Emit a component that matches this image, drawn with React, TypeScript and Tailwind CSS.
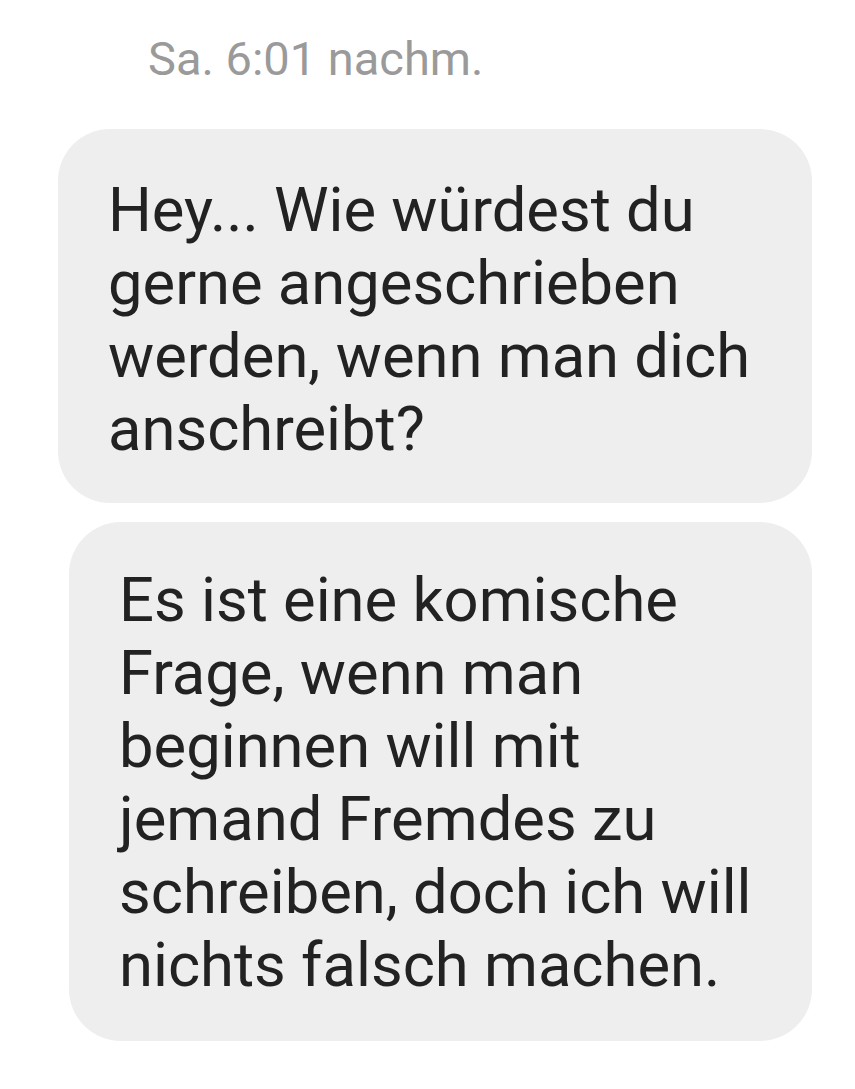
const messages = [
  {
    box: 'w-[754px] pt-[45px] pb-[37px]',
    lines: ['Hey... Wie würdest du', 'gerne angeschrieben', 'werden, wenn man dich', 'anschreibt?'],
  },
  {
    box: 'w-[743px] pt-[42px] pb-[39px]',
    lines: [
      'Es ist eine komische',
      'Frage, wenn man',
      'beginnen will mit',
      'jemand Fremdes zu',
      'schreiben, doch ich will',
      'nichts falsch machen.',
    ],
  },
];

const App = () => {
  return (
    <div className="min-h-screen bg-white font-['Roboto',sans-serif]">
      {/* Timestamp */}
      <div className="pl-[148px] pt-[31px] text-[47px] leading-[55px] text-[#9a9a9a]">
        Sa. 6:01 nachm.
      </div>

      {/* Bubbles */}
      <div className="mt-[43px] flex flex-col items-end gap-[19px] pr-[43px]">
        {messages.map((msg, i) => (
          <div
            key={i}
            className={`${msg.box} rounded-[52px] bg-[#eeeeee] px-[50px] text-[61.5px] leading-[73px] text-[#222222]`}
          >
            {msg.lines.map((line) => (
              <div key={line} className="whitespace-nowrap">
                {line}
              </div>
            ))}
          </div>
        ))}
      </div>
    </div>
  );
};

export default App;
